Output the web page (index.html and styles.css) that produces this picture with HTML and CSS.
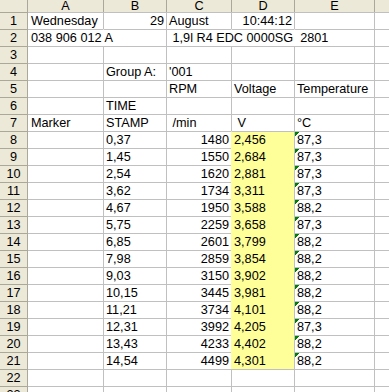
FILE: index.html
```html
<!DOCTYPE html>
<html>
<head>
<meta charset="utf-8">
<link rel="stylesheet" href="styles.css">
</head>
<body>
<div class="sheet">
  <div class="corner"></div><div class="ch">A</div><div class="ch">B</div><div class="ch">C</div><div class="ch">D</div><div class="ch">E</div><div class="ch"></div>

  <div class="rh">1</div><div class="c">Wednesday</div><div class="c r">29</div><div class="c">August</div><div class="c r">10:44:12</div><div class="c"></div><div class="c"></div>
  <div class="rh">2</div><div class="c">038 906 012 A</div><div class="c nl"></div><div class="c"> 1,9l R4 EDC 0000SG  2801</div><div class="c nl"></div><div class="c nl"></div><div class="c"></div>
  <div class="rh">3</div><div class="c"></div><div class="c"></div><div class="c"></div><div class="c"></div><div class="c"></div><div class="c"></div>
  <div class="rh">4</div><div class="c"></div><div class="c">Group A:</div><div class="c">'001</div><div class="c"></div><div class="c"></div><div class="c"></div>
  <div class="rh">5</div><div class="c"></div><div class="c"></div><div class="c">RPM</div><div class="c">Voltage</div><div class="c">Temperature</div><div class="c"></div>
  <div class="rh">6</div><div class="c"></div><div class="c">TIME</div><div class="c"></div><div class="c"></div><div class="c"></div><div class="c"></div>
  <div class="rh">7</div><div class="c">Marker</div><div class="c">STAMP</div><div class="c"> /min</div><div class="c"> V</div><div class="c">°C</div><div class="c"></div>

  <div class="rh">8</div><div class="c"></div><div class="c">0,37</div><div class="c r">1480</div><div class="c y">2,456</div><div class="c t">87,3</div><div class="c"></div>
  <div class="rh">9</div><div class="c"></div><div class="c">1,45</div><div class="c r">1550</div><div class="c y yt">2,684</div><div class="c t">87,3</div><div class="c"></div>
  <div class="rh">10</div><div class="c"></div><div class="c">2,54</div><div class="c r">1620</div><div class="c y yt">2,881</div><div class="c t">87,3</div><div class="c"></div>
  <div class="rh">11</div><div class="c"></div><div class="c">3,62</div><div class="c r">1734</div><div class="c y yt">3,311</div><div class="c t">87,3</div><div class="c"></div>
  <div class="rh">12</div><div class="c"></div><div class="c">4,67</div><div class="c r">1950</div><div class="c y yt">3,588</div><div class="c t">88,2</div><div class="c"></div>
  <div class="rh">13</div><div class="c"></div><div class="c">5,75</div><div class="c r">2259</div><div class="c y yt">3,658</div><div class="c t">87,3</div><div class="c"></div>
  <div class="rh">14</div><div class="c"></div><div class="c">6,85</div><div class="c r">2601</div><div class="c y yt">3,799</div><div class="c t">88,2</div><div class="c"></div>
  <div class="rh">15</div><div class="c"></div><div class="c">7,98</div><div class="c r">2859</div><div class="c y yt">3,854</div><div class="c t">88,2</div><div class="c"></div>
  <div class="rh">16</div><div class="c"></div><div class="c">9,03</div><div class="c r">3150</div><div class="c y yt">3,902</div><div class="c t">88,2</div><div class="c"></div>
  <div class="rh">17</div><div class="c"></div><div class="c">10,15</div><div class="c r">3445</div><div class="c y yt">3,981</div><div class="c t">88,2</div><div class="c"></div>
  <div class="rh">18</div><div class="c"></div><div class="c">11,21</div><div class="c r">3734</div><div class="c y yt">4,101</div><div class="c t">88,2</div><div class="c"></div>
  <div class="rh">19</div><div class="c"></div><div class="c">12,31</div><div class="c r">3992</div><div class="c y yt">4,205</div><div class="c t">87,3</div><div class="c"></div>
  <div class="rh">20</div><div class="c"></div><div class="c">13,43</div><div class="c r">4233</div><div class="c y yt">4,402</div><div class="c t">88,2</div><div class="c"></div>
  <div class="rh">21</div><div class="c"></div><div class="c">14,54</div><div class="c r">4499</div><div class="c y yt">4,301</div><div class="c t">88,2</div><div class="c"></div>
  <div class="rh">22</div><div class="c"></div><div class="c"></div><div class="c"></div><div class="c"></div><div class="c"></div><div class="c"></div>
  <div class="rh">23</div><div class="c"></div><div class="c"></div><div class="c"></div><div class="c"></div><div class="c"></div><div class="c"></div>
</div>
</body>
</html>
```

FILE: styles.css
```css
html, body {
  margin: 0;
  padding: 0;
  background: #ffffff;
  overflow: hidden;
  height: 392px;
}

.sheet {
  display: grid;
  grid-template-columns: 28px 75px 63px 65px 63px 80px 1fr;
  grid-template-rows: 12px repeat(23, 17px);
  font-family: "Liberation Sans", Arial, sans-serif;
  font-size: 12.7px;
  color: #000000;
  width: 389px;
}

.sheet > div {
  box-sizing: border-box;
  white-space: pre;
  min-width: 0;
}

.corner {
  background: #ece9d8;
  border-right: 1px solid #aca899;
}

.ch {
  background: #ece9d8;
  border-left: 1px solid #aca899;
  text-align: center;
  line-height: 12px;
  overflow: hidden;
}

.sheet > .ch:nth-child(2) {
  border-left: none;
}

.rh {
  background: #ece9d8;
  border-top: 1px solid #aca899;
  border-right: 1px solid #aca899;
  text-align: center;
  line-height: 16px;
  overflow: hidden;
}

.c {
  border-top: 1px solid #c0c0c0;
  border-left: 1px solid #c0c0c0;
  line-height: 16px;
  padding: 0 2px;
}

.sheet > .c:nth-child(7n+2) {
  border-left: none;
  padding-left: 3px;
}

.r {
  text-align: right;
}

.nl {
  border-left-color: transparent;
}

.y {
  background: #ffff99;
  border-left-color: #ffff99;
}

.yt {
  border-top-color: #ffff99;
}

.t {
  background-image: linear-gradient(135deg, #008000 3.2px, transparent 3.2px);
  background-repeat: no-repeat;
  background-origin: padding-box;
}
```
